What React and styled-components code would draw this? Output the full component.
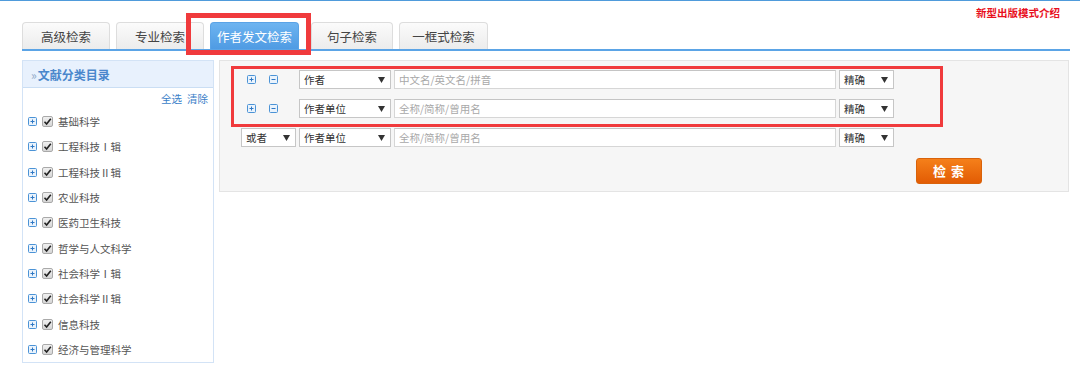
import React from 'react';
import styled, { createGlobalStyle } from 'styled-components';

const GlobalStyle = createGlobalStyle`
  html, body { margin: 0; padding: 0; background: #fff; }
  body { font-family: "Noto Sans CJK SC", "Microsoft YaHei", sans-serif; color: #333; }
  * { box-sizing: border-box; }
`;

const Page = styled.div`
  position: relative;
  width: 1080px;
  height: 365px;
  border-top: 1px solid #4f9bdb;
  overflow: hidden;
`;

const Container = styled.div`
  width: 1070px;
  padding-left: 22px;
`;

const NoticeRow = styled.div`
  height: 21px;
  display: flex;
  justify-content: flex-end;
  align-items: flex-start;
  padding: 5px 10px 0 0;
`;

const NoticeLink = styled.a`
  font-size: 10.5px;
  line-height: 14px;
  font-weight: bold;
  color: #e8101e;
  text-decoration: none;
`;

const TabBar = styled.div`
  display: flex;
  align-items: flex-end;
  gap: 6px;
  height: 29px;
  border-bottom: 2px solid #5ba4e6;
`;

const Tab = styled.div`
  width: ${(p) => p.$w}px;
  margin-left: ${(p) => p.$ml || 0}px;
  height: 27px;
  display: flex;
  align-items: center;
  justify-content: center;
  font-size: 12.5px;
  border: 1px solid ${(p) => (p.$active ? '#5aa3e6' : '#dddddd')};
  border-bottom: none;
  border-radius: 4px 4px 0 0;
  color: ${(p) => (p.$active ? '#ffffff' : '#444444')};
  background: ${(p) =>
    p.$active
      ? 'linear-gradient(#6db4f0, #4f9be3)'
      : 'linear-gradient(#fbfbfb, #ececec)'};
`;

const Main = styled.div`
  display: flex;
  gap: 5px;
  margin-top: 9px;
  align-items: flex-start;
`;

const LeftPanel = styled.div`
  flex: 0 0 192px;
  height: 303px;
  border: 1px solid #d3e3f6;
  background: #fff;
`;

const PanelHeader = styled.div`
  height: 27px;
  display: flex;
  align-items: center;
  padding-left: 8px;
  background: #e8f1fd;
  border-bottom: 1px solid #cadef4;
  font-size: 12px;
  font-weight: bold;
  color: #4a87cc;
`;

const Chevron = styled.span`
  font-weight: normal;
  color: #8fa9c8;
  margin-right: 1px;
`;

const LinkRow = styled.div`
  height: 21px;
  line-height: 21px;
  display: flex;
  justify-content: flex-end;
  gap: 5px;
  padding-right: 5px;
  font-size: 10.5px;
`;

const TextLink = styled.a`
  color: #3b7ec8;
  text-decoration: none;
`;

const TreeItem = styled.div`
  height: 25.3px;
  display: flex;
  align-items: center;
  padding-left: 5px;
  font-size: 10.5px;
  color: #555;
`;

const CheckBox = styled.span`
  width: 11px;
  height: 11px;
  margin: 0 5px;
  display: inline-flex;
  align-items: center;
  justify-content: center;
  border: 1px solid #a9a9a9;
  border-radius: 2px;
  background: linear-gradient(#f0f0f0, #d6d6d6);
`;

const RightPanel = styled.div`
  flex: 0 0 850px;
  height: 132px;
  background: #f6f6f6;
  border: 1px solid #e4e4e4;
  padding: 9px 0 0 21px;
  display: flex;
  flex-direction: column;
  gap: 10px;
`;

const Row = styled.div`
  display: flex;
  align-items: center;
  gap: 3px;
  height: 19px;
`;

const Controls = styled.div`
  width: 55px;
  display: flex;
  align-items: center;
  gap: 13px;
  padding-left: 6px;
`;

const SelectBox = styled.div`
  width: ${(p) => p.$w}px;
  height: 19px;
  display: flex;
  align-items: center;
  justify-content: space-between;
  padding: 0 5px 0 4px;
  background: #fff;
  border: 1px solid #c6c6c6;
  font-size: 10.5px;
  color: #333;
`;

const TextInput = styled.input`
  width: 442px;
  height: 19px;
  padding: 0 4px;
  border: 1px solid #d6d6d6;
  border-top-color: #c4c4c4;
  background: #fff;
  font-family: inherit;
  font-size: 10.5px;
  outline: none;
  &::placeholder { color: #a8a8a8; }
`;

const ButtonRow = styled.div`
  padding-left: 675px;
`;

const SearchButton = styled.button`
  width: 66px;
  height: 26px;
  border: 1px solid #d9620a;
  border-radius: 3px;
  background: linear-gradient(#f5801a, #e25c04);
  color: #fff;
  font-family: inherit;
  font-size: 13px;
  font-weight: bold;
  letter-spacing: 1px;
  padding: 0;
`;

const Highlight = styled.div`
  position: absolute;
  left: ${(p) => p.$x}px;
  top: ${(p) => p.$y}px;
  width: ${(p) => p.$w}px;
  height: ${(p) => p.$h}px;
  border: ${(p) => p.$b}px solid #f03a3c;
  pointer-events: none;
`;

const BoxIcon = ({ minus }) => (
  <svg width="9" height="9" viewBox="0 0 9 9">
    <rect x="0.5" y="0.5" width="8" height="8" rx="1" fill="#eaf3fc" stroke="#4b93d6" />
    <path d={minus ? 'M2.5 4.5h4' : 'M2.5 4.5h4M4.5 2.5v4'} stroke="#2f78c4" strokeWidth="1" />
  </svg>
);

const Arrow = () => (
  <svg width="7" height="6" viewBox="0 0 7 6">
    <polygon points="0,0 7,0 3.5,6" fill="#333" />
  </svg>
);

const Select = ({ w, children }) => (
  <SelectBox $w={w}>
    <span>{children}</span>
    <Arrow />
  </SelectBox>
);

const categories = [
  '基础科学',
  '工程科技Ⅰ辑',
  '工程科技Ⅱ辑',
  '农业科技',
  '医药卫生科技',
  '哲学与人文科学',
  '社会科学Ⅰ辑',
  '社会科学Ⅱ辑',
  '信息科技',
  '经济与管理科学',
];

const tabs = [
  { label: '高级检索', w: 88 },
  { label: '专业检索', w: 88 },
  { label: '作者发文检索', w: 89, active: true },
  { label: '句子检索', w: 82, ml: 6 },
  { label: '一框式检索', w: 89 },
];

export default function App() {
  return (
    <Page>
      <GlobalStyle />
      <Container>
        <NoticeRow>
          <NoticeLink>新型出版模式介绍</NoticeLink>
        </NoticeRow>
        <TabBar>
          {tabs.map((t) => (
            <Tab key={t.label} $w={t.w} $ml={t.ml} $active={t.active}>
              {t.label}
            </Tab>
          ))}
        </TabBar>
        <Main>
          <LeftPanel>
            <PanelHeader>
              <Chevron>»</Chevron>文献分类目录
            </PanelHeader>
            <LinkRow>
              <TextLink>全选</TextLink>
              <TextLink>清除</TextLink>
            </LinkRow>
            {categories.map((c) => (
              <TreeItem key={c}>
                <BoxIcon />
                <CheckBox>
                  <svg width="9" height="9" viewBox="0 0 9 9">
                    <path d="M1.5 4.8 L3.6 7 L7.8 1.8" fill="none" stroke="#222" strokeWidth="1.6" />
                  </svg>
                </CheckBox>
                {c}
              </TreeItem>
            ))}
          </LeftPanel>
          <RightPanel>
            <Row>
              <Controls>
                <BoxIcon />
                <BoxIcon minus />
              </Controls>
              <Select w={92}>作者</Select>
              <TextInput placeholder="中文名/英文名/拼音" />
              <Select w={55}>精确</Select>
            </Row>
            <Row>
              <Controls>
                <BoxIcon />
                <BoxIcon minus />
              </Controls>
              <Select w={92}>作者单位</Select>
              <TextInput placeholder="全称/简称/曾用名" />
              <Select w={55}>精确</Select>
            </Row>
            <Row>
              <Select w={55}>或者</Select>
              <Select w={92}>作者单位</Select>
              <TextInput placeholder="全称/简称/曾用名" />
              <Select w={55}>精确</Select>
            </Row>
            <ButtonRow>
              <SearchButton>检 索</SearchButton>
            </ButtonRow>
          </RightPanel>
        </Main>
      </Container>
      <Highlight $x={186} $y={11.7} $w={125} $h={42} $b={5} />
      <Highlight $x={231} $y={65} $w={712} $h={61} $b={3} />
    </Page>
  );
}
